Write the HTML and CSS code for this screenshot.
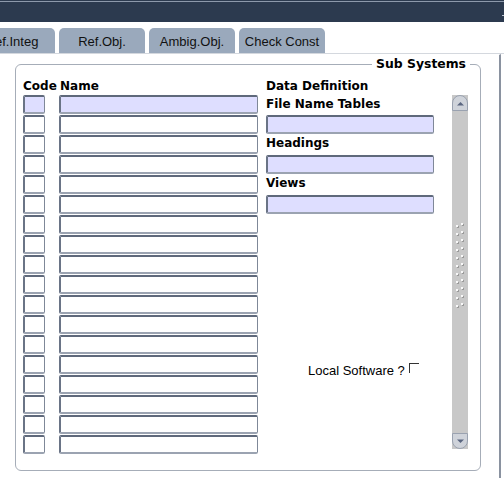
FILE: index.html
```html
<!DOCTYPE html>
<html>
<head>
<meta charset="utf-8">
<link rel="stylesheet" href="styles.css">
</head>
<body>
<div class="titlebar"><span class="tb-mark"></span></div>
<div class="tabs">
  <div class="tab first">Ref.Integ</div>
  <div class="tab">Ref.Obj.</div>
  <div class="tab">Ambig.Obj.</div>
  <div class="tab">Check Const</div>
</div>
<div class="page">
  <div class="group">
    <span class="legend">Sub Systems</span>
    <div class="cols">
      <div class="list">
        <div class="list-head"><span class="h-code">Code</span><span>Name</span></div>
        <div class="rows">
          <div class="row"><div class="fld code sel"></div><div class="fld name sel"></div></div>
          <div class="row"><div class="fld code"></div><div class="fld name"></div></div>
          <div class="row"><div class="fld code"></div><div class="fld name"></div></div>
          <div class="row"><div class="fld code"></div><div class="fld name"></div></div>
          <div class="row"><div class="fld code"></div><div class="fld name"></div></div>
          <div class="row"><div class="fld code"></div><div class="fld name"></div></div>
          <div class="row"><div class="fld code"></div><div class="fld name"></div></div>
          <div class="row"><div class="fld code"></div><div class="fld name"></div></div>
          <div class="row"><div class="fld code"></div><div class="fld name"></div></div>
          <div class="row"><div class="fld code"></div><div class="fld name"></div></div>
          <div class="row"><div class="fld code"></div><div class="fld name"></div></div>
          <div class="row"><div class="fld code"></div><div class="fld name"></div></div>
          <div class="row"><div class="fld code"></div><div class="fld name"></div></div>
          <div class="row"><div class="fld code"></div><div class="fld name"></div></div>
          <div class="row"><div class="fld code"></div><div class="fld name"></div></div>
          <div class="row"><div class="fld code"></div><div class="fld name"></div></div>
          <div class="row"><div class="fld code"></div><div class="fld name"></div></div>
          <div class="row"><div class="fld code"></div><div class="fld name"></div></div>
        </div>
      </div>
      <div class="defs">
        <div class="lbl l1">Data Definition</div>
        <div class="lbl l2">File Name Tables</div>
        <div class="fld wide sel"></div>
        <div class="lbl">Headings</div>
        <div class="fld wide sel"></div>
        <div class="lbl">Views</div>
        <div class="fld wide sel"></div>
        <div class="local"><span>Local Software ?</span><span class="chk"></span></div>
      </div>
      <div class="scroll">
        <div class="sb-btn up"><svg width="9" height="5" viewBox="0 0 9 5"><path d="M1 4.5 L4.5 1 L8 4.5 Z" fill="#5a6680"/></svg></div>
        <div class="sb-track">
          <div class="grip">
            <span></span><span></span><span></span><span></span><span></span><span></span><span></span><span></span><span></span><span></span><span></span>
          </div>
        </div>
        <div class="sb-btn down"><svg width="9" height="5" viewBox="0 0 9 5"><path d="M1 0.5 L4.5 4 L8 0.5 Z" fill="#5a6680"/></svg></div>
      </div>
    </div>
  </div>
</div>
</body>
</html>
```
FILE: styles.css
```css
html, body {
  margin: 0;
  padding: 0;
  width: 504px;
  height: 478px;
  overflow: hidden;
  background: #ffffff;
}
body {
  font-family: "Liberation Sans", Arial, sans-serif;
  font-size: 13px;
  color: #000;
}
.titlebar {
  position: relative;
  height: 21px;
  background: #2c3a4f;
  border-top: 1px solid #2c3a4f;
  box-shadow: inset 0 1px 0 #8d99ab;
}
.tb-mark {
  position: absolute;
  right: 0;
  top: 14px;
  width: 2px;
  height: 1px;
  background: #c0c8d4;
}
.tabs {
  display: flex;
  gap: 4px;
  height: 31px;
  align-items: flex-end;
  overflow: hidden;
  border-bottom: 1px solid #d4d8de;
}
.tab {
  flex: 0 0 86px;
  height: 25px;
  box-sizing: border-box;
  padding-top: 3px;
  background: #9aa9bc;
  border-radius: 5px 5px 0 0;
  text-align: center;
  line-height: 22px;
  font-size: 13px;
  color: #111;
}
.tab.first {
  margin-left: -31px;
}
.page {
  height: 424px;
  box-sizing: border-box;
  width: 501px;
  border-top: 1px solid #ffffff;
  border-right: 2px solid #8a92a0;
  padding: 9px 0 0 15px;
}
.group {
  position: relative;
  width: 466px;
  height: 407px;
  box-sizing: border-box;
  border: 1px solid #a6adb8;
  border-radius: 6px;
  padding: 13px 12px 0 7px;
}
.legend {
  position: absolute;
  top: -9px;
  right: 10px;
  padding: 0 4px 0 4px;
  background: #fff;
  font-family: "DejaVu Sans", sans-serif;
  font-weight: bold;
  font-size: 12.4px;
  line-height: 16px;
}
.cols {
  display: flex;
}
.list {
  width: 236px;
}
.list-head {
  font-family: "DejaVu Sans", sans-serif;
  font-weight: bold;
  font-size: 12px;
  line-height: 16px;
  height: 17px;
  display: flex;
}
.h-code {
  width: 37px;
}
.rows {
  display: flex;
  flex-direction: column;
  gap: 1px;
}
.row {
  display: flex;
  gap: 14px;
}
.fld {
  height: 19px;
  box-sizing: border-box;
  border: 1px solid #7f8898;
  border-top: 2px solid #5f697b;
  border-left: 2px solid #6a7486;
  border-bottom: 2px solid #9ba3b1;
  border-radius: 2px;
  background: #fff;
}
.fld.sel {
  background: #dedeff;
}
.code {
  width: 22px;
}
.name {
  width: 199px;
}
.defs {
  width: 168px;
  margin-left: 8px;
  display: flex;
  flex-direction: column;
}
.lbl {
  font-family: "DejaVu Sans", sans-serif;
  font-weight: bold;
  font-size: 12px;
  line-height: 16px;
  height: 21px;
  padding-top: 1px;
  box-sizing: border-box;
}
.lbl.l1 {
  height: 18px;
  padding-top: 0;
}
.lbl.l2 {
  height: 19px;
  padding-top: 0;
}
.wide {
  width: 168px;
}
.local {
  margin-top: 149px;
  margin-left: 42px;
  display: flex;
  align-items: flex-start;
  font-size: 13px;
  line-height: 16px;
}
.chk {
  width: 9px;
  height: 9px;
  margin-left: 4px;
  border-top: 1px solid #333;
  border-left: 1px solid #333;
}
.scroll {
  margin-left: 18px;
  margin-top: 17px;
  width: 17px;
  height: 354px;
  display: flex;
  flex-direction: column;
  background: #c8c8c8;
}
.sb-btn {
  height: 16px;
  box-sizing: border-box;
  background: #cfd3da;
  border: 1px solid #9aa2b0;
  display: flex;
  align-items: center;
  justify-content: center;
}
.sb-btn.up {
  border-radius: 8px 8px 0 0;
}
.sb-btn.down {
  border-radius: 0 0 8px 8px;
}
.sb-track {
  flex: 1;
  display: flex;
  align-items: center;
  justify-content: center;
}
.grip {
  display: flex;
  flex-direction: column;
  gap: 4px;
  margin-top: -14px;
}
.grip span {
  position: relative;
  width: 10px;
  height: 4px;
}
.grip span::before,
.grip span::after {
  content: "";
  position: absolute;
  width: 2px;
  height: 2px;
  background: #f8f8f8;
  box-shadow: 1px 1px 0 #9a9a9a;
}
.grip span::before {
  left: 1px;
  top: 2px;
}
.grip span::after {
  left: 6px;
  top: 0;
}
```
